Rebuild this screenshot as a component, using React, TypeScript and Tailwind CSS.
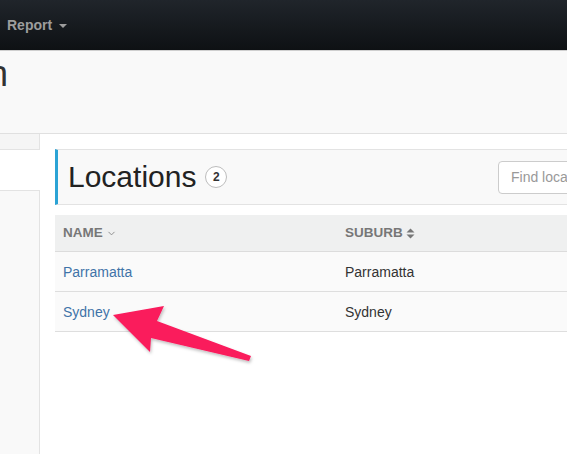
import { ChevronDown } from "lucide-react";

const rows = [
  { name: "Parramatta", suburb: "Parramatta" },
  { name: "Sydney", suburb: "Sydney" },
];

function SortIcon() {
  return (
    <svg width="9" height="11" viewBox="0 0 9 11" className="ml-[3px]">
      <path d="M4.5 0.5 L8.5 4.5 H0.5 Z" fill="#777" />
      <path d="M4.5 10.5 L8.5 6.5 H0.5 Z" fill="#777" />
    </svg>
  );
}

function Arrow() {
  return (
    <svg
      className="pointer-events-none absolute left-0 top-0"
      width="567"
      height="455"
      viewBox="0 0 567 455"
    >
      <defs>
        <filter id="shadow" x="-10%" y="-10%" width="130%" height="130%">
          <feDropShadow dx="1" dy="2" stdDeviation="1.5" floodColor="#000" floodOpacity="0.25" />
        </filter>
      </defs>
      <polygon
        points="113,315 164,306 157,321 251,356 249,361 151,338 150,352"
        fill="#fa1a5c"
        filter="url(#shadow)"
      />
    </svg>
  );
}

export default function App() {
  return (
    <div className="relative h-[455px] w-[567px] overflow-hidden bg-white font-['Liberation_Sans',Arial,sans-serif]">
      <nav className="flex h-[51px] items-center border-b border-[#cfcfcf] bg-gradient-to-b from-[#20252b] to-[#0e1114] px-[7px]">
        <span className="text-[14px] font-bold text-[#9d9d9d]">Report</span>
        <span className="ml-[7px] mt-[1px] h-0 w-0 border-x-[4px] border-t-[4px] border-x-transparent border-t-[#9d9d9d]" />
      </nav>

      <header className="h-[83px] border-b border-[#e0e0e0] bg-[#f9f9f9]">
        <h1 className="-ml-[12px] pt-[5px] text-[36px] leading-none text-[#333]">n</h1>
      </header>

      <div className="flex">
        <aside className="w-[40px] shrink-0">
          <div className="h-[16px] border-b border-r border-[#e3e3e3] bg-[#f5f5f5]" />
          <div className="h-[40px]" />
          <div className="h-[264px] border-r border-t border-[#e3e3e3] bg-[#f9f9f9]" />
        </aside>

        <main className="shrink-0 pl-[15px] pt-[15px]">
          <div className="w-[660px]">
            <div className="flex h-[56px] items-center border-y border-l-[3px] border-[#e3e3e3] border-l-[#2ba3d5] bg-[#f9f9f9] pl-[10px] pr-[15px]">
              <h2 className="text-[30px] leading-none text-[#222]">Locations</h2>
              <span className="ml-[9px] flex h-[22px] w-[22px] items-center justify-center rounded-full border border-[#bdbdbd] bg-white text-[12px] font-bold text-[#333]">
                2
              </span>
              <input
                className="ml-auto h-[33px] w-[202px] rounded-[4px] border border-[#cccccc] bg-white px-[12px] text-[14px] text-[#555] placeholder:text-[#999]"
                placeholder="Find location"
              />
            </div>

            <div className="mt-[10px]">
              <div className="grid h-[37px] grid-cols-[282px_1fr] items-center border-b border-[#dcdcdc] bg-[#eff0f0] pt-[1px] text-[13.5px] font-bold uppercase text-[#777]">
                <div className="flex items-center pl-[8px]">
                  NAME
                  <ChevronDown size={11} strokeWidth={2} className="ml-[3px] text-[#888]" />
                </div>
                <div className="flex items-center pl-[8px]">
                  SUBURB
                  <SortIcon />
                </div>
              </div>
              {rows.map((r) => (
                <div
                  key={r.name}
                  className="grid h-[40px] grid-cols-[282px_1fr] items-center border-b border-[#dedede] bg-[#fafafa] pt-[2px] text-[14px]"
                >
                  <a className="pl-[8px] text-[#3f73a8]" href="#">
                    {r.name}
                  </a>
                  <div className="pl-[8px] text-[#333]">{r.suburb}</div>
                </div>
              ))}
            </div>
          </div>
        </main>
      </div>

      <Arrow />
    </div>
  );
}
